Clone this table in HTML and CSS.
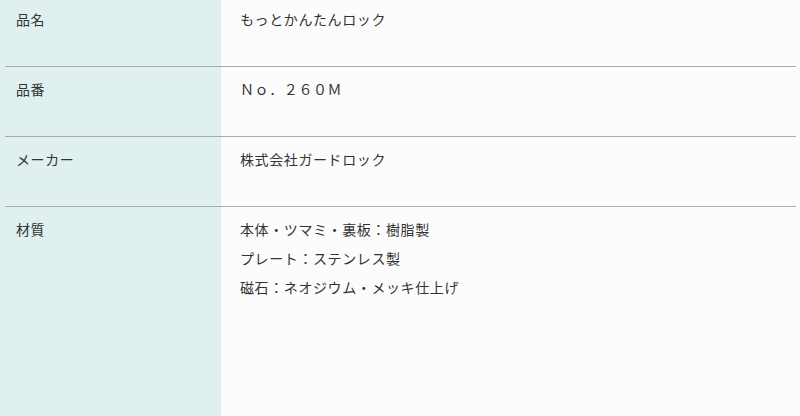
FILE: index.html
```html
<!DOCTYPE html>
<html lang="ja">
<head>
<meta charset="utf-8">
<link rel="stylesheet" href="styles.css">
</head>
<body>
<div class="spec">
  <div class="row first">
    <div class="label">品名</div>
    <div class="value">もっとかんたんロック</div>
  </div>
  <div class="row">
    <div class="label">品番</div>
    <div class="value">Ｎｏ．２６０Ｍ</div>
  </div>
  <div class="row">
    <div class="label">メーカー</div>
    <div class="value">株式会社ガードロック</div>
  </div>
  <div class="row last">
    <div class="label">材質</div>
    <div class="value">本体・ツマミ・裏板：樹脂製<br>プレート：ステンレス製<br>磁石：ネオジウム・メッキ仕上げ</div>
  </div>
</div>
</body>
</html>
```

FILE: styles.css
```css
html, body {
  margin: 0;
  padding: 0;
  height: 100%;
}
body {
  background: linear-gradient(to right, #e0f0f0 0, #e0f0f0 221px, #fcfcfc 221px);
  font-family: "Noto Sans CJK JP", "Noto Sans", sans-serif;
  font-size: 14px;
  line-height: 29px;
  color: #333;
  letter-spacing: 0.6px;
}
.spec {
  padding: 0 4px 0 5px;
}
.row {
  display: grid;
  grid-template-columns: 216px 1fr;
  padding: 8px 0 32px;
  border-bottom: 1px solid #aaa;
}
.row.first {
  padding-top: 5px;
}
.row.last {
  border-bottom: none;
}
.label {
  padding-left: 11px;
}
.value {
  padding-left: 19px;
}
```
